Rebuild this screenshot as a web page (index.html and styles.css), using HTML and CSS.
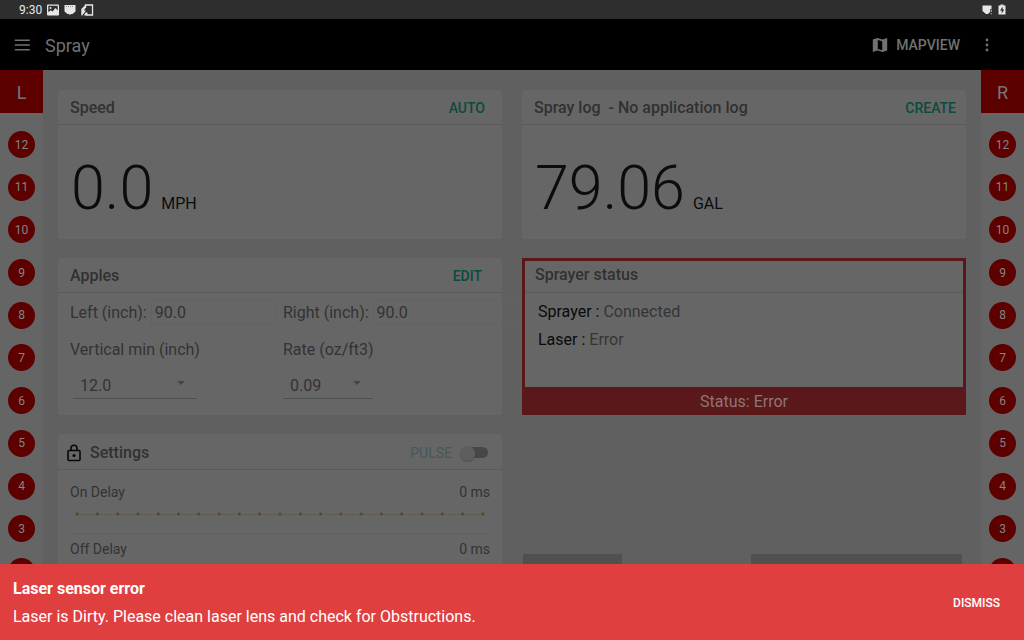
FILE: index.html
```html
<!DOCTYPE html>
<html lang="en">
<head>
<meta charset="utf-8">
<meta name="viewport" content="width=device-width, initial-scale=1">
<title>Spray</title>
<link rel="stylesheet" href="styles.css">
</head>
<body>
<div class="screen">
  <div class="statusbar">
    <span class="clock">9:30</span>
    <svg class="sys" width="12" height="12" viewBox="0 0 12 12"><path fill="#e6e6e6" fill-rule="evenodd" d="M1 .5h10a1 1 0 0 1 1 1v9a1 1 0 0 1-1 1H1a1 1 0 0 1-1-1v-9a1 1 0 0 1 1-1zM1.300 1.800v6.500l2.500-2 1.700 1.200 3-3.500 2.200 2.500V1.800zM3.500 3a1 1 0 1 1 0 2 1 1 0 0 1 0-2z"/></svg>
    <svg class="sys" width="12" height="12" viewBox="0 0 12 12"><path fill="#e6e6e6" d="M.5 1h11v6.500L8.500 10H7l-1 1-1-1H3.500l-3-2.500z"/><path stroke="#8a8a8a" d="M2 2.500h8" stroke-dasharray="1 1"/></svg>
    <svg class="sys" width="13" height="12" viewBox="0 0 13 12"><path fill="none" stroke="#e6e6e6" stroke-width="1.300" d="M4.500 4V1h7v10H5.500"/><path fill="#e6e6e6" d="M4.800.5v3.200L2.800 6.500H5L1.200 11.500H.3V5zM4.500 8.500h2v3H3z"/></svg>
    <span class="grow"></span>
    <svg class="sys" width="11" height="12" viewBox="0 0 11 12"><path fill="#e6e6e6" d="M.5 1.500h9v3.500H8v3L6 10H4L.5 7z"/><path fill="#b0b0b0" d="M8.600 5.500h1.200v2.500H8.600zM8.600 9h1.200v1.200H8.600z"/></svg>
    <svg class="sys battery" width="8" height="12" viewBox="0 0 8 12"><path fill="#e6e6e6" d="M2.500 .5h3v1H7.500v9H.5v-9h2z"/><path fill="#2e2e2e" d="M4.700 2.500L2 6.500h1.700v3L6.300 5.500H4.700z"/></svg>
  </div>

  <header class="appbar">
    <button class="iconbtn" aria-label="Menu"><svg width="16" height="12" viewBox="0 0 16 12"><path stroke="#717171" stroke-width="1.400" d="M.8 1.200h15M.8 6h15M.8 10.800h15"/></svg></button>
    <h1 class="title">Spray</h1>
    <button class="mapview"><svg width="16" height="16" viewBox="0 0 16 16"><path fill="#717171" fill-rule="evenodd" d="M.8 2.500L5.300 1l5.400 1.500L15.200 1v12.500L10.700 15l-5.400-1.500L.8 15zM5.800 2.900v9l4.400 1.300v-9z"/></svg>MAPVIEW</button>
    <button class="iconbtn" aria-label="More"><svg width="4" height="14" viewBox="0 0 4 14"><g fill="#717171"><circle cx="2" cy="2" r="1.400"/><circle cx="2" cy="7" r="1.400"/><circle cx="2" cy="12" r="1.400"/></g></svg></button>
  </header>

  <div class="body">
    <nav class="rail">
      <div class="side">L</div>
      <div class="nozzles"><button>12</button><button>11</button><button>10</button><button>9</button><button>8</button><button>7</button><button>6</button><button>5</button><button>4</button><button>3</button><button>2</button></div>
    </nav>

    <main class="content">
      <div class="column">
        <section class="card">
          <div class="head"><h2>Speed</h2><button class="link wide">AUTO</button></div>
          <div class="reading"><span class="value">0.0</span><span class="unit">MPH</span></div>
        </section>

        <section class="card apples">
          <div class="head"><h2>Apples</h2><button class="link">EDIT</button></div>
          <div class="form">
            <div class="inline"><label for="left">Left (inch):</label><input id="left" value="90.0"></div>
            <div class="inline"><label for="right">Right (inch):</label><input id="right" value="90.0"></div>
            <label class="above" for="vmin">Vertical min (inch)</label>
            <label class="above" for="rate">Rate (oz/ft3)</label>
            <div class="pick vmin"><select id="vmin"><option>12.0</option></select></div>
            <div class="pick rate"><select id="rate"><option>0.09</option></select></div>
          </div>
        </section>

        <section class="card settings">
          <div class="head">
            <svg class="lock" width="14" height="18" viewBox="0 0 14 18"><rect x="1" y="6.500" width="12" height="10" rx="1" fill="none" stroke="#080808" stroke-width="1.600"/><path fill="none" stroke="#080808" stroke-width="1.600" d="M4 6.500V4.200a3 3 0 0 1 6 0v2.300"/><circle cx="7" cy="11.500" r="1.600" fill="#080808"/></svg>
            <h2>Settings</h2>
            <label class="pulse" for="pulse">PULSE</label>
            <input class="switch" type="checkbox" id="pulse">
          </div>
          <div class="delay">
            <div class="line"><label for="on">On Delay</label><output>0 ms</output></div>
            <input class="slider" type="range" id="on" min="0" max="20" value="0">
          </div>
          <div class="delay">
            <div class="line"><label for="off">Off Delay</label><output>0 ms</output></div>
            <input class="slider" type="range" id="off" min="0" max="20" value="0">
          </div>
        </section>
      </div>

      <div class="column">
        <section class="card">
          <div class="head"><h2>Spray log &nbsp;- No application log</h2><button class="link create">CREATE</button></div>
          <div class="reading"><span class="value">79.06</span><span class="unit">GAL</span></div>
        </section>

        <section class="card alert">
          <div class="head"><h2>Sprayer status</h2></div>
          <dl class="facts">
            <div><dt>Sprayer :</dt> <dd>Connected</dd></div>
            <div><dt>Laser :</dt> <dd>Error</dd></div>
          </dl>
          <div class="strip">Status: Error</div>
        </section>

        <div class="actions"><div class="block small"></div><div class="block large"></div></div>
      </div>
    </main>

    <nav class="rail">
      <div class="side">R</div>
      <div class="nozzles"><button>12</button><button>11</button><button>10</button><button>9</button><button>8</button><button>7</button><button>6</button><button>5</button><button>4</button><button>3</button><button>2</button></div>
    </nav>
  </div>

  <div class="snackbar" role="alert">
    <div class="message"><strong>Laser sensor error</strong><p>Laser is Dirty. Please clean laser lens and check for Obstructions.</p></div>
    <button class="dismiss">DISMISS</button>
  </div>
</div>
</body>
</html>
```
FILE: styles.css
```css
* { box-sizing: border-box; }
body { margin: 0; font-family: Roboto, "Liberation Sans", sans-serif; font-size: 16px; line-height: 20px; color: #333; background: #606060; }
button, input, select { font: inherit; color: inherit; background: none; border: 0; padding: 0; margin: 0; border-radius: 0; }
h1, h2, p, dl, dd { margin: 0; }
svg { display: block; flex: none; }

.screen { position: relative; height: 100vh; overflow: hidden; display: flex; flex-direction: column; }

.statusbar { display: flex; align-items: center; height: 19px; flex: none; padding: 0 18px 0 19px; background: #2e2e2e; color: #e6e6e6; font-size: 12px; }
.clock { margin-right: 5px; }
.sys { margin-right: 5px; }
.battery { margin-right: 0; }
.grow { flex: 1; }

.appbar { display: flex; align-items: center; height: 51px; flex: none; padding: 0 35px 0 14px; background: #000; color: #717171; }
.iconbtn { display: flex; }
.title { flex: 1; margin-left: 15px; padding-top: 2px; font-size: 18px; font-weight: 400; }
.mapview { display: flex; align-items: center; gap: 8px; margin-right: 25px; font-size: 14px; font-weight: 500; }

.body { flex: 1; min-height: 0; display: flex; }
.rail { width: 43px; flex: none; display: flex; flex-direction: column; background: #656565; }
.side { height: 43px; flex: none; display: flex; align-items: center; justify-content: center; padding-top: 2px; background: #5c0000; color: #777; font-size: 18px; }
.nozzles { flex: 1; display: flex; flex-direction: column; align-items: center; justify-content: space-between; padding: 18px 0 55px; }
.nozzles button { width: 27px; height: 27px; border-radius: 50%; background: #5c0000; color: #858585; font-size: 12px; }

.content { flex: 1; min-width: 0; display: grid; grid-template-columns: 1fr 1fr; gap: 20px; align-items: start; padding: 20px 15px 0; overflow: hidden; }
.column { display: flex; flex-direction: column; gap: 19px; min-width: 0; }
.card { background: #666; border-radius: 2px; }
.head { display: flex; align-items: center; height: 35px; padding: 2px 10px 0 12px; border-bottom: 1px solid #5a5a5a; }
.head h2 { flex: 1; font-size: 16px; font-weight: 500; color: #313131; }
.link { color: #0c4a3e; font-size: 14px; font-weight: 500; margin-right: 10px; }
.link.wide { margin-right: 7px; }
.link.create { margin-right: 0; }

.reading { display: flex; align-items: baseline; gap: 8px; height: 114px; padding: 26px 13px 0; color: #0c0c0c; }
.value { font-size: 61px; line-height: 74px; font-weight: 300; }
.unit { font-size: 16px; }

.form { display: grid; grid-template-columns: 206px 1fr; column-gap: 7px; padding: 7px 7px 16px 12px; }
.inline { display: flex; align-items: center; gap: 4px; height: 25px; }
.inline input { flex: 1; min-width: 0; height: 25px; padding-left: 3px; border: 1px solid #626262; }
.above { margin-top: 15px; }
.pick { position: relative; margin-top: 13px; height: 26px; border-bottom: 1px solid #505050; }
.pick::after { content: ""; position: absolute; right: 12px; top: 8px; border: 4px solid transparent; border-top-color: #454545; border-bottom: 0; pointer-events: none; }
.pick select { appearance: none; width: 100%; height: 25px; padding-left: 7px; }
.vmin { width: 124px; margin-left: 3px; }
.rate { width: 90px; }

.settings .head { height: 36px; padding: 2px 14px 0 9px; }
.lock { margin-right: 9px; }
.pulse { color: #475859; font-size: 14px; margin-right: 8px; }
.switch { appearance: none; position: relative; width: 28px; height: 14px; }
.switch::before { content: ""; position: absolute; inset: 1px 0 2px 8px; border-radius: 6px; background: #474747; }
.switch::after { content: ""; position: absolute; left: 0; top: 0; width: 15px; height: 15px; border-radius: 50%; background: #5e5e5e; box-shadow: 0 1px 1px #505050; }
.delay { margin: 0 12px; height: 58px; border-bottom: 1px solid #606060; }
.head + .delay { height: 64px; padding-top: 6px; }
.line { display: flex; justify-content: space-between; padding-top: 6px; font-size: 14px; }
.head + .delay + .delay .line { padding-top: 5px; }
.slider { appearance: none; display: block; width: calc(100% + 6px); height: 8px; margin: 8px -3px 0;
  background:
    radial-gradient(circle, #504a2c 1px, transparent 2px) center / calc(100% / 21) 8px repeat-x,
    linear-gradient(#625c4a, #625c4a) center / calc(100% - 20px) 1px no-repeat; }
.slider::-webkit-slider-thumb { appearance: none; width: 20px; height: 8px; background: transparent; }

.alert { border: 3px solid #5a181a; border-radius: 0; }
.alert .head { height: 32px; padding: 0 9px 4px 10px; }
.facts { height: 94px; padding: 9px 13px; color: #0a0a0a; }
.facts div { margin-bottom: 8px; }
.facts dt, .facts dd { display: inline; }
.facts dd { color: #353535; }
.strip { height: 25px; padding-top: 2px; background: #5a181a; color: #8d7676; text-align: center; line-height: 25px; }

.actions { display: flex; justify-content: space-between; margin-top: 120px; padding: 0 4px 0 1px; }
.block { height: 40px; background: #505050; }
.small { width: 99px; }
.large { width: 211px; }

.snackbar { position: absolute; left: 0; right: 0; bottom: 0; display: flex; align-items: center; justify-content: space-between; padding: 15px 24px 13px 13px; background: #df3f3f; color: #fff; }
.message { display: flex; flex-direction: column; gap: 8px; }
.message strong { font-weight: 700; }
.dismiss { font-size: 12px; font-weight: 500; }
```
